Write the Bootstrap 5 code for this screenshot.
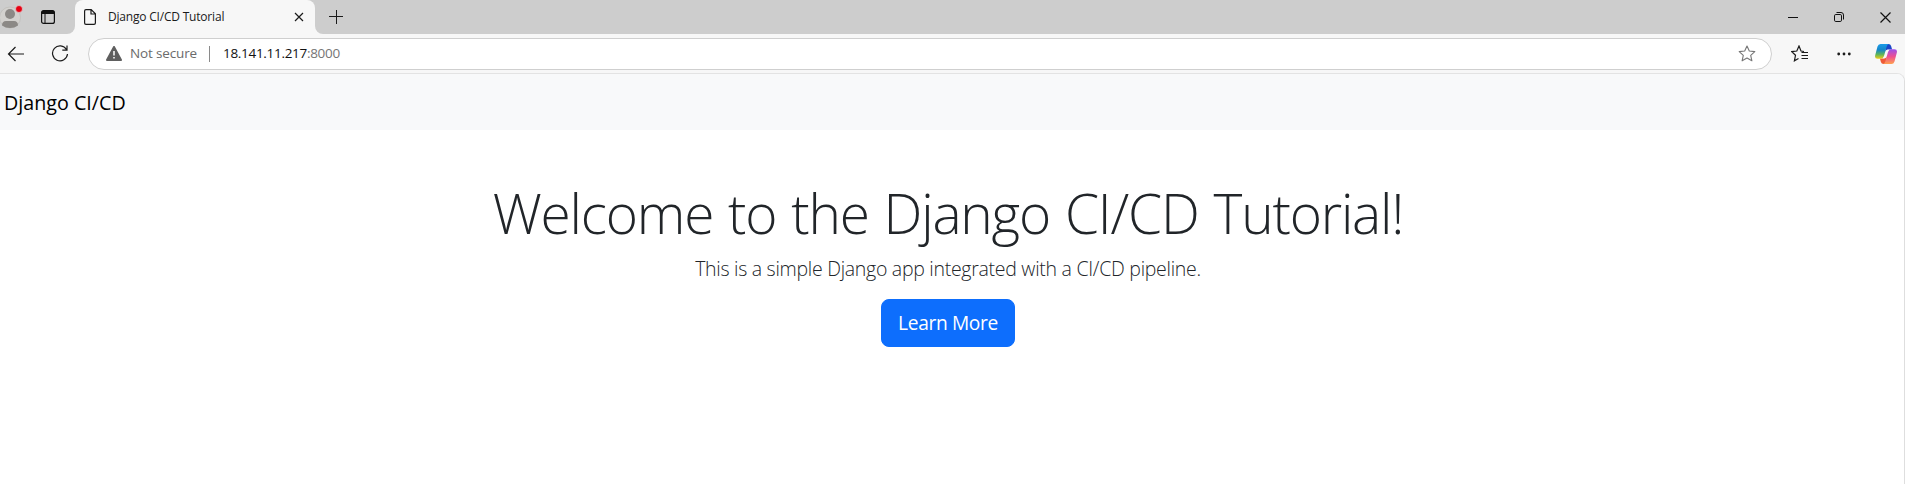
<!DOCTYPE html>
<html lang="en">
<head>
<meta charset="utf-8">
<title>Django CI/CD Tutorial</title>
<link href="https://cdn.jsdelivr.net/npm/bootstrap@5.3.0/dist/css/bootstrap.min.css" rel="stylesheet">
<style>
body{font-family:"Open Sans","Noto Sans",sans-serif;height:484px;overflow:hidden;background:#f7f7f7}
svg{display:block;flex:none}
.tabstrip{height:34px;background:#cdcdcd}
.strip-left{width:75px;background:#cdcdcd;border-bottom-right-radius:8px}
.strip-right{background:#cdcdcd;border-bottom-left-radius:8px;padding-right:14px}
.strip-base{background:#f7f7f7}
.tab-active{width:240px;background:#f7f7f7;border-radius:8px 8px 0 0;padding:0 11px 0 9px;font-size:12px;color:#1b1b1b}
.tab-edge{background:#cdcdcd}
.tab-title{letter-spacing:-.2px;margin-left:12px}
.icon-panel{margin-right:20px}
.icon-plus{margin-left:14px}
.icon-restore{margin:0 36px}
.toolbar{height:39px;background:#f7f7f7;padding:0 7px}
.icon-reload{margin-left:27px}
.address{height:32px;width:1684px;background:#fff;border:1px solid #cfcfcf;border-radius:16px;margin-left:19px;padding:0 15px 0 17px;font-size:13.5px;color:#6b6b6b}
.security{margin-left:8px;letter-spacing:-.15px}
.divider{width:1px;height:16px;background:#8a8a8a;margin:0 13px 0 12px}
.url-text{letter-spacing:-.3px;color:#767676}
.host{color:#111}
.icon-favs{margin-left:19px}
.icon-more{margin-left:29px}
.icon-copilot{margin-left:24px}
.page{height:411px;background:#fff;border-top:1px solid #e3e3e3;border-right:1px solid #dedede;border-top-right-radius:8px;overflow:hidden}
.page-inner{margin-left:-8px}
.navbar{height:56px}
.navbar-brand{font-size:19.7px;line-height:30px;padding:6px 0 4px}
.headline{font-size:55px;line-height:65px;font-weight:300;margin-bottom:8px;letter-spacing:-1.2px;word-spacing:1.8px;padding-top:2px}
.lead{font-size:19.5px;line-height:30px;letter-spacing:-.28px;padding-top:1px;margin-bottom:15px}
.btn-lg{font-size:19.2px;line-height:30px;letter-spacing:-.37px;vertical-align:top}
</style>
</head>
<body>
<header class="tabstrip d-flex">
  <div class="strip-base"><div class="strip-left h-100 d-flex align-items-center">
    <svg width="24" height="34" viewBox="0 0 24 34"><circle cx="10" cy="17.500" r="10.500" fill="#d3d1ce" stroke="#bdbbb8" stroke-width=".7"/><circle cx="10" cy="14" r="5" fill="#8c8986"/><path d="M2 25.500q0-4.500 4-4.500h8q4 0 4 4.500-3.500 2.500-8 2.500t-8-2.500z" fill="#8c8986"/><circle cx="19" cy="9" r="3.500" fill="#e60012" stroke="#e3dada" stroke-width=".7"/></svg>
    <svg class="icon-panel ms-auto" width="14" height="14" viewBox="0 0 14 14"><rect x=".6" y=".6" width="12.800" height="12.800" rx="2" fill="none" stroke="#111" stroke-width="1.200"/><path d="M.6 4V2.500Q.6.600 2.500.6h9q1.900 0 1.900 1.900V4z" fill="#111"/><path d="M4 4v9.500" stroke="#111"/></svg>
  </div></div>
  <div class="tab-edge"><div class="tab-active h-100 d-flex align-items-center">
    <svg width="12" height="16" viewBox="0 0 12 16" fill="none" stroke="#1b1b1b" stroke-width="1.200"><path d="M.6 2Q.6.600 2 .6h5.200l4.200 4.200V14q0 1.400-1.400 1.400H2Q.6 15.400.6 14zM7 .6V5h4.400"/></svg>
    <span class="tab-title">Django CI/CD Tutorial</span>
    <svg class="ms-auto" width="10" height="10" viewBox="0 0 10 10" stroke="#1b1b1b" stroke-width="1.200"><path d="M1 1l8 8M9 1L1 9"/></svg>
  </div></div>
  <div class="strip-base flex-grow-1"><div class="strip-right h-100 d-flex align-items-center">
    <svg class="icon-plus" width="14" height="14" viewBox="0 0 14 14" stroke="#1b1b1b"><path d="M7.500 0v14M0 6.500h14"/></svg>
    <svg class="ms-auto" width="10" height="10" viewBox="0 0 10 10"><path d="M0 5.500h10" stroke="#111"/></svg>
    <svg class="icon-restore" width="10" height="10" viewBox="0 0 10 10" fill="none" stroke="#111"><rect x=".5" y="2.500" width="7" height="7" rx="1.300"/><path d="M2.500.5H7q2.500 0 2.500 2.500v4.500"/></svg>
    <svg width="11" height="11" viewBox="0 0 11 11" stroke="#111" stroke-width="1.200"><path d="M.5.500l10 10M10.500.500l-10 10"/></svg>
  </div></div>
</header>
<div class="toolbar d-flex align-items-center">
  <svg width="17" height="16" viewBox="0 0 17 16" fill="none" stroke="#1b1b1b" stroke-width="1.200"><path d="M17 8H1.500M8.500 1L1.500 8l7 7"/></svg>
  <svg class="icon-reload" width="18" height="18" viewBox="0 0 18 18" fill="none" stroke="#1b1b1b" stroke-width="1.200"><path d="M15.500 4.500A7.500 7.500 0 1 0 16.500 9M16 .5v4.700h-4.700"/></svg>
  <div class="address d-flex align-items-center">
    <svg width="16" height="15" viewBox="0 0 16 15"><path d="M8 1l7 13H1z" fill="#5f5f5f" stroke="#5f5f5f" stroke-width="2" stroke-linejoin="round"/><path d="M8 5v4.500M8 11v1.600" stroke="#fff" stroke-width="1.500"/></svg>
    <span class="security">Not secure</span>
    <span class="divider"></span>
    <span class="url-text"><span class="host">18.141.11.217</span>:8000</span>
    <svg class="ms-auto" width="18" height="17" viewBox="0 0 18 17" fill="none" stroke="#777" stroke-width="1.100" stroke-linejoin="round"><path d="M9 1l2.300 5 5.500.6-4.100 3.700 1.200 5.500L9 13l-4.900 2.800 1.200-5.500L1.200 6.600 6.700 6z"/></svg>
  </div>
  <svg class="icon-favs" width="17" height="17" viewBox="0 0 17 17" fill="none" stroke="#1b1b1b" stroke-width="1.200"><path d="M13 6.500l-3-.5L8 1 5.800 6 .8 6.600l3.700 3.700-1.100 5.500L7.500 13.500M10.500 7.500H17M10.500 10.500H17M10.500 13.500H17"/></svg>
  <svg class="icon-more" width="14" height="4" viewBox="0 0 14 4" fill="#1b1b1b"><circle cx="1.700" cy="2" r="1.400"/><circle cx="7" cy="2" r="1.400"/><circle cx="12.300" cy="2" r="1.400"/></svg>
  <svg class="icon-copilot" width="22" height="20" viewBox="0 0 22 20">
    <defs>
      <linearGradient id="cool" x1="0" y1="0" x2="0" y2="1"><stop offset="0" stop-color="#1a9be8"/><stop offset=".4" stop-color="#1586c8"/><stop offset=".7" stop-color="#5cb45c"/><stop offset="1" stop-color="#f2cc16"/></linearGradient>
      <linearGradient id="warm" x1="0" y1="0" x2="0" y2="1"><stop offset="0" stop-color="#9a50ee"/><stop offset=".5" stop-color="#ee5090"/><stop offset="1" stop-color="#ffa04e"/></linearGradient>
    </defs>
    <path d="M11 0h2.500q2 0 2.600 2l1 3.500H13q-2 0-2.600 2z" fill="#1c46c8"/>
    <path d="M11 20H8.500q-2 0-2.600-2l-1-3.500H9q2 0 2.600-2z" fill="#ee5a38"/>
    <path d="M5.500 0H14q-1.700.3-2.300 2.500L9 12q-.8 2.800-3.300 2.800H2.500q-3.200 0-2.300-3.600L2.500 2.500Q3.300 0 5.500 0z" fill="url(#cool)"/>
    <path d="M16.500 20H8q1.700-.3 2.300-2.500L13 8q.8-2.800 3.300-2.800h3.200q3.200 0 2.300 3.600l-2.300 8.700q-.8 2.500-3 2.500z" fill="url(#warm)"/>
    <path d="M12 6l1.500-.5q-.8.700-1.100 2L10 14l-2 .5q1-.5 1.400-2z" fill="#f7f7f7"/>
  </svg>
</div>
<main class="page"><div class="page-inner">
  <nav class="navbar bg-light py-0"><div class="container-fluid"><a class="navbar-brand" href="#">Django CI/CD</a></div></nav>
  <div class="container mt-5 text-center">
    <h1 class="headline">Welcome to the Django CI/CD Tutorial!</h1>
    <p class="lead">This is a simple Django app integrated with a CI/CD pipeline.</p>
    <a class="btn btn-primary btn-lg" href="#">Learn More</a>
  </div>
</div></main>
<script src="https://cdn.jsdelivr.net/npm/bootstrap@5.3.0/dist/js/bootstrap.bundle.min.js"></script>
</body>
</html>
